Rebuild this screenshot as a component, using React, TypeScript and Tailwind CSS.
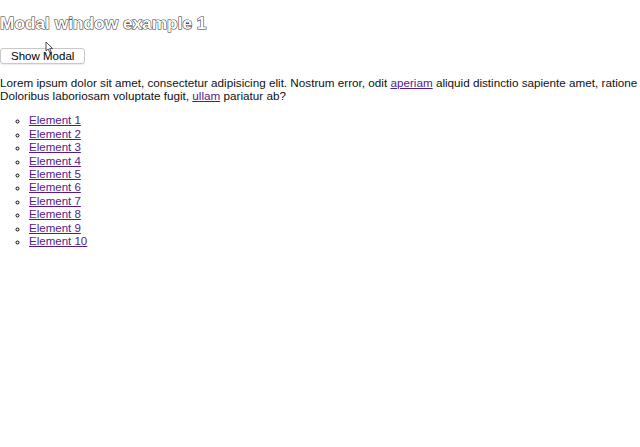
import React from "react";

const items = Array.from({ length: 10 }, (_, i) => `Element ${i + 1}`);

function Cursor() {
  return (
    <svg
      className="absolute left-[45px] top-[41px]"
      width="9"
      height="13"
      viewBox="0 0 9 13"
    >
      <path
        d="M1 1 L1 10 L3.2 8 L4.8 11.8 L6.2 11.2 L4.7 7.6 L7.6 7.6 Z"
        fill="#fff"
        stroke="#222"
        strokeWidth="0.8"
        strokeLinejoin="round"
      />
    </svg>
  );
}

export default function App() {
  return (
    <div className="relative h-[447px] w-[640px] overflow-hidden bg-white font-['Liberation_Sans',Arial,sans-serif] text-[11.52px] leading-[1.15] text-black">
      <div className="w-[680px]">
        <h2 className="mt-[14.3px] mb-[14.3px] text-[17.3px] font-bold leading-[1.15] text-white [-webkit-text-stroke:1.1px_#333] [paint-order:stroke_fill]">
          Modal window example 1
        </h2>

        <button className="h-[16px] rounded-[3px] border border-[#c8c8c8] bg-white px-[10px] text-[11.52px] leading-none text-black shadow-[0_1px_1px_rgba(0,0,0,0.08)]">
          Show Modal
        </button>

        <p className="my-[11.5px] text-[11.7px] text-[#111]">
          Lorem ipsum dolor sit amet, consectetur adipisicing elit. Nostrum
          error, odit{" "}
          <a href="#" className="text-[#551a8b] underline">
            aperiam
          </a>{" "}
          aliquid distinctio sapiente amet, ratione quis. Doloribus laboriosam
          voluptate fugit,{" "}
          <a href="#" className="text-[#551a8b] underline">
            ullam
          </a>{" "}
          pariatur ab?
        </p>

        <ul className="my-[11.5px] list-[circle] pl-[29px]">
          {items.map((label) => (
            <li key={label} className="leading-[13.4px]">
              <a href="#" className="text-[#551a8b] underline">
                {label}
              </a>
            </li>
          ))}
        </ul>
      </div>
      <Cursor />
    </div>
  );
}
